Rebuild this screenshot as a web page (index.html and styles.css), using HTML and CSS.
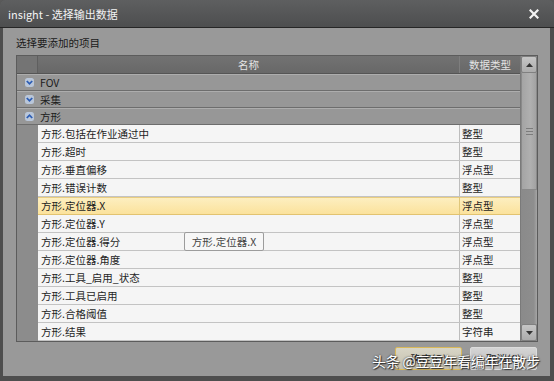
FILE: index.html
```html
<!DOCTYPE html>
<html lang="zh-CN">
<head>
<meta charset="utf-8">
<title>insight - 选择输出数据</title>
<link rel="stylesheet" href="styles.css">
</head>
<body>
<div class="window">
  <div class="titlebar">
    <span class="title">insight - 选择输出数据</span>
    <span class="close">
      <svg width="10" height="10" viewBox="0 0 10 10"><path d="M1.5 1.5 L8.5 8.5 M8.5 1.5 L1.5 8.5" stroke="#f4f4f4" stroke-width="2.2" stroke-linecap="square"/></svg>
    </span>
  </div>
  <div class="body">
    <div class="label">选择要添加的项目</div>
    <div class="table">
      <div class="grid">
        <div class="row header">
          <div class="corner"></div>
          <div class="cell name-h">名称</div>
          <div class="cell type-h">数据类型</div>
        </div>
        <div class="row group">
          <div class="gicon"><svg width="9" height="9" viewBox="0 0 9 9"><rect x="0" y="0" width="9" height="9" rx="2.5" fill="#b9c6d9"/><path d="M1.8 3 L4.5 5.8 L7.2 3" fill="none" stroke="#2b5cb4" stroke-width="1.8"/></svg></div>
          <div class="gname">FOV</div>
        </div>
        <div class="row group">
          <div class="gicon"><svg width="9" height="9" viewBox="0 0 9 9"><rect x="0" y="0" width="9" height="9" rx="2.5" fill="#b9c6d9"/><path d="M1.8 3 L4.5 5.8 L7.2 3" fill="none" stroke="#2b5cb4" stroke-width="1.8"/></svg></div>
          <div class="gname">采集</div>
        </div>
        <div class="row group">
          <div class="gicon"><svg width="9" height="9" viewBox="0 0 9 9"><rect x="0" y="0" width="9" height="9" rx="2.5" fill="#b9c6d9"/><path d="M1.8 6 L4.5 3.2 L7.2 6" fill="none" stroke="#2b5cb4" stroke-width="1.8"/></svg></div>
          <div class="gname">方形</div>
        </div>
        <div class="row data"><div class="rh"></div><div class="cell dname">方形.包括在作业通过中</div><div class="cell dtype">整型</div></div>
        <div class="row data"><div class="rh"></div><div class="cell dname">方形.超时</div><div class="cell dtype">整型</div></div>
        <div class="row data"><div class="rh"></div><div class="cell dname">方形.垂直偏移</div><div class="cell dtype">浮点型</div></div>
        <div class="row data"><div class="rh"></div><div class="cell dname">方形.错误计数</div><div class="cell dtype">整型</div></div>
        <div class="row data selected"><div class="rh"></div><div class="cell dname">方形.定位器.X</div><div class="cell dtype">浮点型</div></div>
        <div class="row data"><div class="rh"></div><div class="cell dname">方形.定位器.Y</div><div class="cell dtype">浮点型</div></div>
        <div class="row data"><div class="rh"></div><div class="cell dname">方形.定位器.得分</div><div class="cell dtype">浮点型</div></div>
        <div class="row data"><div class="rh"></div><div class="cell dname">方形.定位器.角度</div><div class="cell dtype">浮点型</div></div>
        <div class="row data"><div class="rh"></div><div class="cell dname">方形.工具_启用_状态</div><div class="cell dtype">整型</div></div>
        <div class="row data"><div class="rh"></div><div class="cell dname">方形.工具已启用</div><div class="cell dtype">整型</div></div>
        <div class="row data"><div class="rh"></div><div class="cell dname">方形.合格阈值</div><div class="cell dtype">整型</div></div>
        <div class="row data"><div class="rh"></div><div class="cell dname">方形.结果</div><div class="cell dtype">字符串</div></div>
      </div>
      <div class="scrollbar">
        <div class="sbtn"><svg width="7" height="4" viewBox="0 0 7 4"><path d="M0 4 L3.5 0 L7 4 Z" fill="#333"/></svg></div>
        <div class="thumb"><span class="grip"></span><span class="grip"></span><span class="grip"></span></div>
        <div class="track"></div>
        <div class="sbtn"><svg width="7" height="4" viewBox="0 0 7 4"><path d="M0 0 L3.5 4 L7 0 Z" fill="#333"/></svg></div>
      </div>
    </div>
    <div class="buttons">
      <div class="btn ok">确定(O)</div>
      <div class="btn cancel">取消(C)</div>
    </div>
  </div>
  <div class="tooltip">方形.定位器.X</div>
  <div class="watermark">头条 @豆豆年看编年在散步</div>
</div>
</body>
</html>
```
FILE: styles.css
```css
html, body {
  margin: 0;
  padding: 0;
  background: #5a5a5a;
}
.window {
  position: relative;
  width: 554px;
  height: 381px;
  display: flex;
  flex-direction: column;
  font-family: "Noto Sans CJK SC", "Microsoft YaHei", sans-serif;
  font-size: 10.5px;
  color: #1e1e1e;
  background: #4e4e4e;
  border-radius: 5px 5px 0 0;
  overflow: hidden;
}
.titlebar {
  height: 27px;
  display: flex;
  align-items: center;
  justify-content: space-between;
  padding: 0 15px 0 8px;
  background: linear-gradient(#5e5f60, #4d4e4f);
  border-bottom: 1px solid #262626;
  color: #f2f2f2;
  font-size: 11px;
}
.close {
  display: flex;
  align-items: center;
}
.body {
  flex: 1;
  display: flex;
  flex-direction: column;
  margin: 0 4px 5px 3px;
  padding: 7px 12px 0 13px;
  background: #999999;
}
.label {
  height: 16px;
  line-height: 16px;
  margin-bottom: 4px;
  color: #1a1a1a;
}
.table {
  display: flex;
  border: 1px solid #5c5c5c;
  background: #8c8c8c;
}
.grid {
  flex: 1;
  display: flex;
  flex-direction: column;
}
.row {
  display: flex;
}
.header {
  height: 17px;
  background: linear-gradient(#727272, #686868);
  border-bottom: 1px solid #555;
  color: #e4e4e4;
}
.corner {
  width: 20px;
  background: #747474;
  border-right: 1px solid #5f5f5f;
}
.cell {
  display: flex;
  align-items: center;
}
.name-h {
  flex: 1;
  justify-content: center;
}
.type-h {
  width: 60px;
  justify-content: center;
  border-left: 1px solid #7e7e7e;
}
.group {
  height: 15px;
  align-items: center;
  background: #979797;
  border-top: 1px solid #adadad;
  border-bottom: 1px solid #6d6d6d;
  color: #1c1c1c;
}
.gicon {
  width: 9px;
  height: 9px;
  margin: 0 6px 0 8px;
  display: flex;
}
.gname {
  line-height: 15px;
}
.data {
  height: 17px;
  border-bottom: 1px solid #c3c3c3;
  background: #f5f5f5;
}
.rh {
  width: 21px;
  background: #8c8c8c;
  margin-bottom: -1px;
}
.dname {
  flex: 1;
  padding-left: 3px;
}
.dtype {
  width: 58px;
  padding-left: 2px;
  border-left: 1px solid #bdbdbd;
}
.selected {
  background: linear-gradient(#fdefc2, #fbe29c);
  border-bottom-color: #e2c370;
  box-shadow: inset 0 1px 0 #e9cd80;
}
.selected .dtype {
  border-left-color: #e0c77a;
}
.scrollbar {
  width: 16px;
  display: flex;
  flex-direction: column;
  background: #8e8e8e;
  border-left: 1px solid #7a7a7a;
}
.sbtn {
  height: 15px;
  display: flex;
  align-items: center;
  justify-content: center;
  background: linear-gradient(#c6c6c6, #acacac);
  border: 1px solid #808080;
  border-radius: 2px;
}
.thumb {
  height: 116px;
  display: flex;
  flex-direction: column;
  align-items: center;
  justify-content: center;
  gap: 2px;
  background: linear-gradient(90deg, #a4a4a4, #b0b0b0 60%, #a2a2a2);
  border: 1px solid #8a8a8a;
  border-top: 0;
}
.grip {
  width: 7px;
  height: 1px;
  background: #7c7c7c;
}
.track {
  flex: 1;
  background: linear-gradient(90deg, #8a8a8a, #8e8e8e 80%, #a5a5a5);
}
.buttons {
  display: flex;
  justify-content: flex-end;
  gap: 8px;
  margin-top: 5px;
  padding-right: 1px;
}
.btn {
  width: 65px;
  height: 21px;
  display: flex;
  align-items: center;
  justify-content: center;
  border-radius: 2px;
  color: #222;
}
.ok {
  background: linear-gradient(#d8d5c6, #c4c0ae);
  border: 1px solid #d9b95a;
}
.cancel {
  background: linear-gradient(#d4d4d4, #bdbdbd);
  border: 1px solid #dcdcdc;
}
.tooltip {
  position: absolute;
  left: 184px;
  top: 232px;
  width: 78px;
  height: 17px;
  display: flex;
  align-items: center;
  justify-content: center;
  background: #f7f7f7;
  border: 1px solid #9c9c9c;
  border-radius: 2px;
  color: #444;
}
.watermark {
  position: absolute;
  left: 372px;
  top: 352px;
  font-size: 14px;
  line-height: 18px;
  color: #ffffff;
  text-shadow: 0 0 2px #222, 1px 1px 1px #333;
  letter-spacing: -0.2px;
}
```
